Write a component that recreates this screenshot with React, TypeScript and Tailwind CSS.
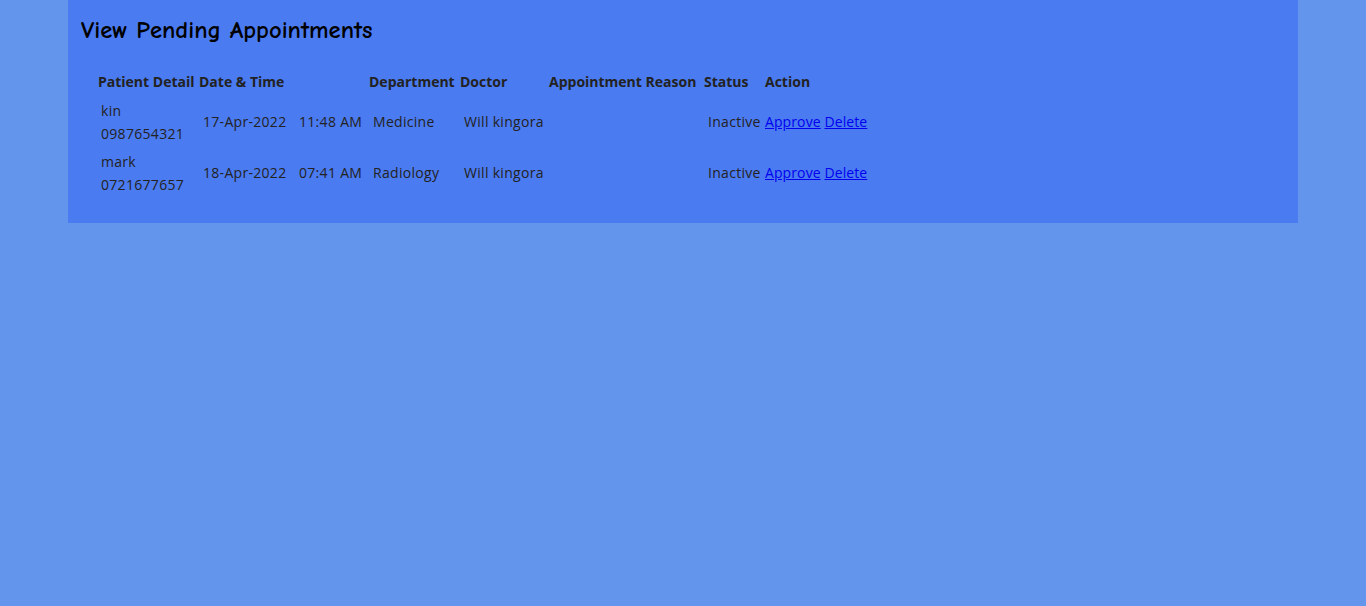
const rows = [
  { name: "kin", phone: "0987654321", date: "17-Apr-2022", time: "11:48 AM", dept: "Medicine", doctor: "Will kingora", reason: "", status: "Inactive" },
  { name: "mark", phone: "0721677657", date: "18-Apr-2022", time: "07:41 AM", dept: "Radiology", doctor: "Will kingora", reason: "", status: "Inactive" },
];

export default function App() {
  return (
    <div className="min-h-[606px] w-full bg-[#6495ed] font-['Open_Sans',sans-serif]">
      <div className="mx-auto w-[1230px] bg-[#4b7bf0] pb-[25px]">
        <h2 className="pl-[13px] pt-[15px] font-['Comic_Sans_MS','Comic_Neue','Liberation_Sans',sans-serif] text-[24.6px] font-bold leading-[30px] text-black">
          View Pending Appointments
        </h2>

        <table className="ml-[28px] mt-[26px] border-collapse text-[14px] text-[#222]">
          <thead>
            <tr className="text-left font-bold leading-[22px] [&>th]:pb-[3px] [&>th]:align-top">
              <th className="w-[101px] pl-[2px] whitespace-nowrap">Patient Detail</th>
              <th className="w-[98px] pl-[2px] whitespace-nowrap">Date &amp; Time</th>
              <th className="w-[72px]"></th>
              <th className="w-[91px] pl-[2px]">Department</th>
              <th className="w-[89px] pl-[2px]">Doctor</th>
              <th className="w-[155px] pl-[2px] whitespace-nowrap">Appointment Reason</th>
              <th className="w-[61px] pl-[2px]">Status</th>
              <th className="w-[110px] pl-[2px]">Action</th>
            </tr>
          </thead>
          <tbody>
            {rows.map((r) => (
              <tr key={r.phone} className="h-[51px] leading-[23px] tracking-[0.3px] whitespace-nowrap">
                <td className="pl-[5px]">
                  <div>{r.name}</div>
                  <div>{r.phone}</div>
                </td>
                <td className="pl-[6px]">{r.date}</td>
                <td className="pl-[4px]">{r.time}</td>
                <td className="pl-[6px]">{r.dept}</td>
                <td className="pl-[6px]">{r.doctor}</td>
                <td className="pl-[6px]">{r.reason}</td>
                <td className="pl-[6px]">{r.status}</td>
                <td className="pl-[2px] tracking-[0.1px]">
                  <a href="#" className="text-[#0000ee] underline">Approve</a>{" "}
                  <a href="#" className="text-[#0000ee] underline">Delete</a>
                </td>
              </tr>
            ))}
          </tbody>
        </table>
      </div>
    </div>
  );
}
